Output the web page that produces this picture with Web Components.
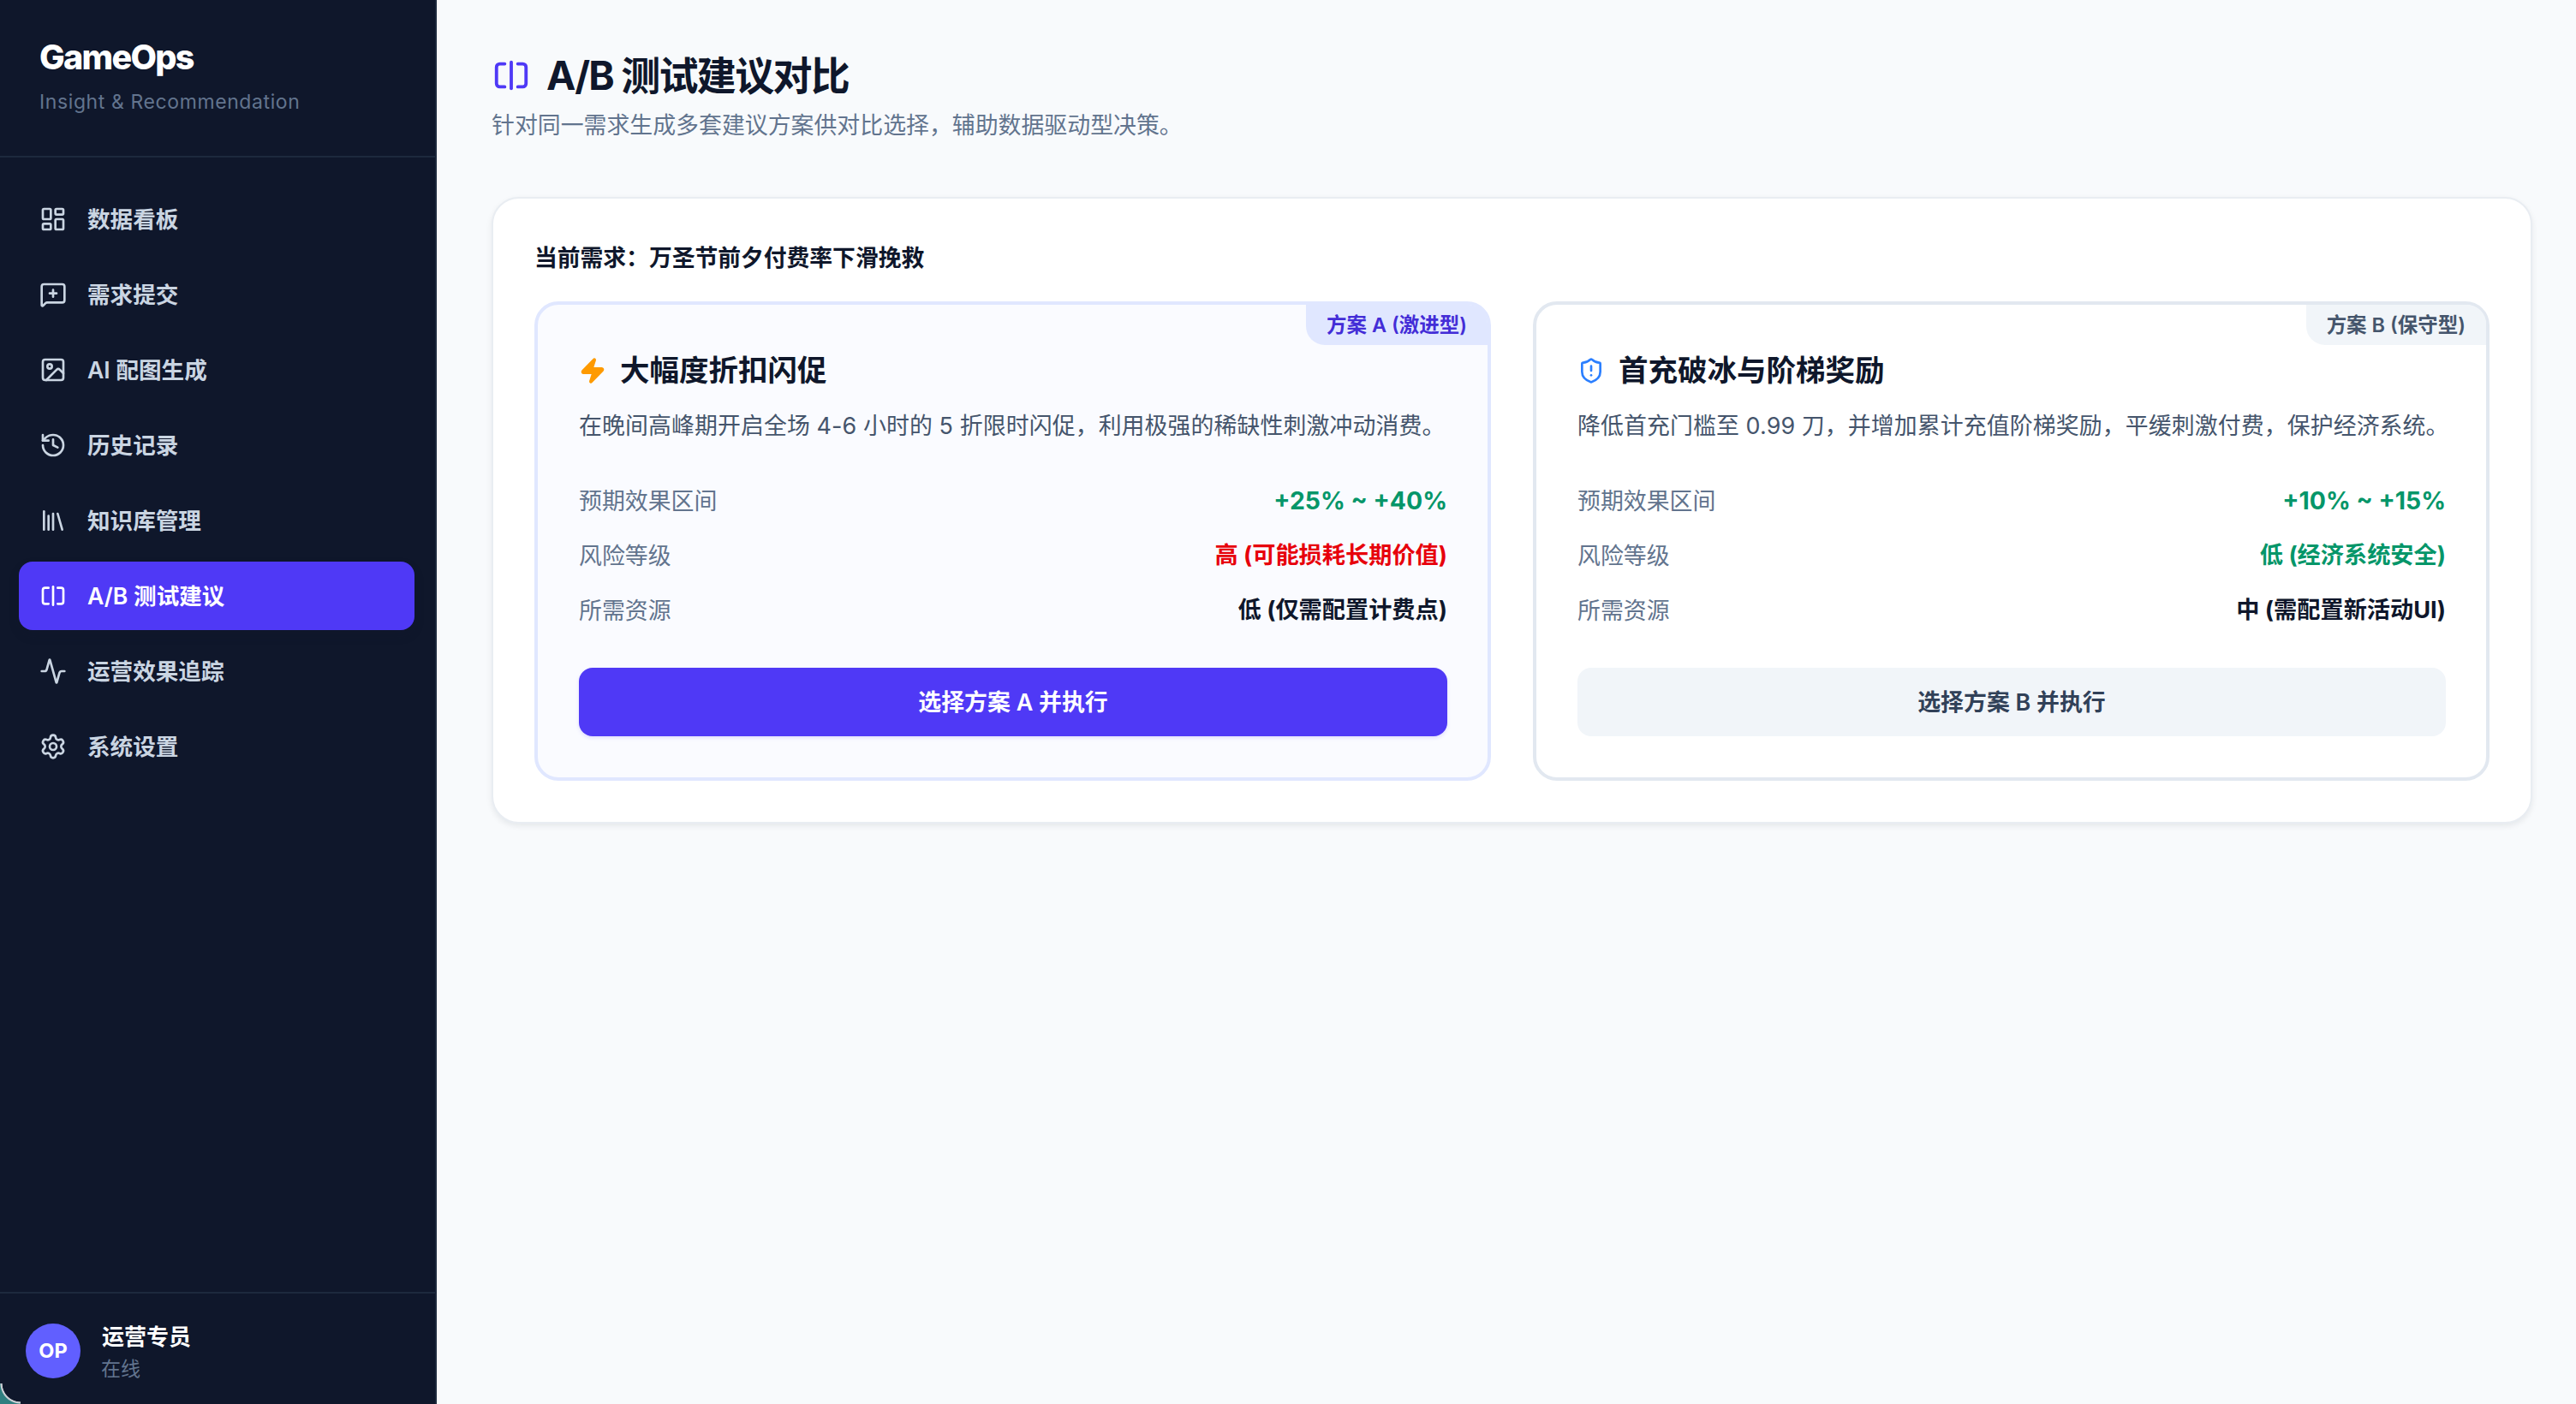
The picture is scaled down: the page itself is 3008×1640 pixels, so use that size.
<!DOCTYPE html>
<html lang="zh-CN"><head><meta charset="utf-8"><title>GameOps</title>
<style>
html,body{margin:0;height:100%;overflow:hidden}
body{font-family:Inter,"Noto Sans CJK SC",sans-serif;color:#0f172b;background:#f8fafc}
</style></head><body>
<ops-app>
  <ops-sidebar slot="side">
    <ops-nav-item icon="dashboard">数据看板</ops-nav-item>
    <ops-nav-item icon="message">需求提交</ops-nav-item>
    <ops-nav-item icon="image">AI 配图生成</ops-nav-item>
    <ops-nav-item icon="history">历史记录</ops-nav-item>
    <ops-nav-item icon="library">知识库管理</ops-nav-item>
    <ops-nav-item icon="split" active>A/B 测试建议</ops-nav-item>
    <ops-nav-item icon="activity">运营效果追踪</ops-nav-item>
    <ops-nav-item icon="settings">系统设置</ops-nav-item>
  </ops-sidebar>
  <ops-page-head></ops-page-head>
  <ops-panel need="当前需求：万圣节前夕付费率下滑挽救">
    <ops-plan variant="a" tag="方案 A (激进型)" icon="zap" title="大幅度折扣闪促"
      desc="在晚间高峰期开启全场 4-6 小时的 5 折限时闪促，利用极强的稀缺性刺激冲动消费。" action="选择方案 A 并执行">
      <ops-metric label="预期效果区间" tone="green" big>+25% ~ +40%</ops-metric>
      <ops-metric label="风险等级" tone="red">高 (可能损耗长期价值)</ops-metric>
      <ops-metric label="所需资源">低 (仅需配置计费点)</ops-metric>
    </ops-plan>
    <ops-plan variant="b" tag="方案 B (保守型)" icon="shield" title="首充破冰与阶梯奖励"
      desc="降低首充门槛至 0.99 刀，并增加累计充值阶梯奖励，平缓刺激付费，保护经济系统。" action="选择方案 B 并执行">
      <ops-metric label="预期效果区间" tone="green" big>+10% ~ +15%</ops-metric>
      <ops-metric label="风险等级" tone="green">低 (经济系统安全)</ops-metric>
      <ops-metric label="所需资源">中 (需配置新活动UI)</ops-metric>
    </ops-plan>
  </ops-panel>
</ops-app>
<script>
const ICONS={
dashboard:'<rect width="7" height="9" x="3" y="3" rx="1"/><rect width="7" height="5" x="14" y="3" rx="1"/><rect width="7" height="9" x="14" y="12" rx="1"/><rect width="7" height="5" x="3" y="16" rx="1"/>',
message:'<path d="M22 17a2 2 0 0 1-2 2H6.828a2 2 0 0 0-1.414.586l-2.202 2.202A.71.71 0 0 1 2 21.286V5a2 2 0 0 1 2-2h16a2 2 0 0 1 2 2z"/><path d="M12 8v6"/><path d="M9 11h6"/>',
image:'<rect width="18" height="18" x="3" y="3" rx="2" ry="2"/><circle cx="9" cy="9" r="2"/><path d="m21 15-3.086-3.086a2 2 0 0 0-2.828 0L6 21"/>',
history:'<path d="M3 12a9 9 0 1 0 9-9 9.75 9.75 0 0 0-6.74 2.74L3 8"/><path d="M3 3v5h5"/><path d="M12 7v5l4 2"/>',
library:'<path d="m16 6 4 14"/><path d="M12 6v14"/><path d="M8 8v12"/><path d="M4 4v16"/>',
split:'<path d="M8 19H5c-1.1 0-2-.9-2-2V7c0-1.1.9-2 2-2h3"/><path d="M16 5h3c1.1 0 2 .9 2 2v10c0 1.1-.9 2-2 2h-3"/><path d="M12 4v16"/>',
activity:'<path d="M22 12h-2.48a2 2 0 0 0-1.93 1.46l-2.35 8.36a.25.25 0 0 1-.48 0L9.24 2.18a.25.25 0 0 0-.48 0l-2.35 8.36A2 2 0 0 1 4.49 12H2"/>',
settings:'<path d="M9.671 4.136a2.34 2.34 0 0 1 4.659 0 2.34 2.34 0 0 0 3.319 1.915 2.34 2.34 0 0 1 2.33 4.033 2.34 2.34 0 0 0 0 3.831 2.34 2.34 0 0 1-2.33 4.033 2.34 2.34 0 0 0-3.319 1.915 2.34 2.34 0 0 1-4.659 0 2.34 2.34 0 0 0-3.32-1.915 2.34 2.34 0 0 1-2.33-4.033 2.34 2.34 0 0 0 0-3.831A2.34 2.34 0 0 1 6.35 6.051a2.34 2.34 0 0 0 3.32-1.915"/><circle cx="12" cy="12" r="3"/>',
zap:'<path d="M4 14a1 1 0 0 1-.78-1.63l9.9-10.2a.5.5 0 0 1 .86.46l-1.92 6.02A1 1 0 0 0 13 10h7a1 1 0 0 1 .78 1.63l-9.9 10.2a.5.5 0 0 1-.86-.46l1.92-6.02A1 1 0 0 0 11 14z" fill="currentColor"/>',
shield:'<path d="M20 13c0 5-3.5 7.5-7.66 8.95a1 1 0 0 1-.67-.01C7.5 20.5 4 18 4 13V6a1 1 0 0 1 1-1c2 0 4.5-1.2 6.24-2.72a1.17 1.17 0 0 1 1.52 0C14.51 3.81 17 5 19 5a1 1 0 0 1 1 1z"/><path d="M12 8v4"/><path d="M12 16h.01"/>'
};
const svg=(n,s,w=2)=>`<svg xmlns="http://www.w3.org/2000/svg" width="${s}" height="${s}" viewBox="0 0 24 24" fill="none" stroke="currentColor" stroke-width="${w}" stroke-linecap="round" stroke-linejoin="round" style="display:block;flex:none">${ICONS[n]}</svg>`;
function def(name,render){customElements.define(name,class extends HTMLElement{
  constructor(){super();this.attachShadow({mode:'open'})}
  connectedCallback(){this.shadowRoot.innerHTML=render(this)}
})}
def('ops-app',()=>`<style>
:host{display:flex;width:3008px;height:1640px;overflow:hidden;position:relative;background:#f8fafc}
main{flex:1;min-width:0;padding:0 51px 0 64px;box-sizing:border-box}
.corner{position:absolute;left:0;bottom:0;width:24px;height:24px;background:radial-gradient(circle at 100% 0,transparent 0 21px,#c9ced3 21.7px 23px,#2f7f80 24px)}
</style><slot name="side"></slot><main><slot></slot></main><div class="corner"></div>`);
def('ops-sidebar',()=>`<style>
:host{display:flex;flex-direction:column;flex:none;width:510px;height:1640px;box-sizing:border-box;background:#0f172b;border-right:2px solid #1d293d}
header{height:184px;box-sizing:border-box;padding-top:41px;padding-left:46px;border-bottom:2px solid #1d293d;flex:none}
h1{margin:0;font:800 39.5px/52px Inter,sans-serif;letter-spacing:-1.7px;color:#fff}
p{margin:10px 0 0;font:400 23px/32px Inter,sans-serif;letter-spacing:.6px;color:#62748e}
nav{flex:1;padding:32px 24px 0 22px;display:flex;flex-direction:column;gap:8px}
footer{height:131px;box-sizing:border-box;border-top:2px solid #1d293d;padding:33px 0 0 30px;display:flex;gap:25px;flex:none}
.av{width:64px;height:64px;margin-top:2px;border-radius:50%;background:#615fff;color:#fff;font:700 23.5px/64px Inter,sans-serif;text-align:center;flex:none}
.n{font:600 26px/36px Inter,"Noto Sans CJK SC",sans-serif;color:#fff}
.s{font:400 23px/30px Inter,"Noto Sans CJK SC",sans-serif;color:#62748e;margin-top:4px;margin-left:-1px}
</style><header><h1>GameOps</h1><p>Insight &amp; Recommendation</p></header><nav><slot></slot></nav>
<footer><div class="av">OP</div><div><div class="n">运营专员</div><div class="s">在线</div></div></footer>`);
def('ops-nav-item',h=>{const a=h.hasAttribute('active');return `<style>
:host{display:flex;align-items:center;gap:24px;height:80px;padding-left:24px;border-radius:16px;box-sizing:border-box;font:600 26.6px/36px Inter,"Noto Sans CJK SC",sans-serif;
color:${a?'#fff':'#cad5e2'};background:${a?'#4f39f6':'transparent'};${a?'box-shadow:0 6px 12px rgba(15,23,43,.18);':''}}
</style>${svg(h.getAttribute('icon'),32)}<slot></slot>`});
def('ops-page-head',()=>`<style>
:host{display:block;height:230px;box-sizing:border-box;padding-top:64px}
.t{display:flex;align-items:center;gap:18px;height:48px;color:#4f39f6}
h2{margin:0;font:700 46px/48px Inter,"Noto Sans CJK SC",sans-serif;letter-spacing:-1.7px;color:#0f172b}
p{margin:12px 0 0;font:400 26.9px/44px Inter,"Noto Sans CJK SC",sans-serif;color:#62748e}
</style><div class="t">${svg('split',46)}<h2>A/B 测试建议对比</h2></div><p>针对同一需求生成多套建议方案供对比选择，辅助数据驱动型决策。</p>`);
def('ops-panel',h=>`<style>
:host{display:block;height:732px;box-sizing:border-box;background:#fff;border:2px solid #e9edf2;border-radius:32px;padding:50px 48px 0;box-shadow:0 3px 7px rgba(15,23,43,.08)}
.need{margin:0 0 32px;font:700 26.8px/38px Inter,"Noto Sans CJK SC",sans-serif;color:#0f172b;height:38px;letter-spacing:-.02px}
.g{display:grid;grid-template-columns:1117px 1117px;gap:49px}
</style><div class="need">${h.getAttribute('need')}</div><div class="g"><slot></slot></div>`);
def('ops-plan',h=>{const a=h.getAttribute('variant')==='a';return `<style>
:host{display:block;position:relative;height:560px;box-sizing:border-box;border:4px solid ${a?'#e0e7ff':'#e2e8f0'};border-radius:28px;padding:53px 47px 0 48px;background:${a?'#fafbff':'#fff'}}
.tag{position:absolute;top:0;right:0;height:47px;box-sizing:border-box;padding:1px 24px 0;font:600 23.5px/46px Inter,"Noto Sans CJK SC",sans-serif;background:${a?'#e0e7ff':'#f1f5f9'};color:${a?'#432dd7':'#45556c'};border-radius:0 22px 0 22px}
.t{display:flex;align-items:center;gap:16px;height:48px;color:${a?'#fe9a00':'#2b7fff'}}
h3{margin:0;font:700 34.5px/48px Inter,"Noto Sans CJK SC",sans-serif;color:#0f172b}
p{margin:18px 0 0;font:400 26.9px/44px Inter,"Noto Sans CJK SC",sans-serif;color:#45556c;letter-spacing:.1px;white-space:nowrap}
.m{margin-top:34px;display:flex;flex-direction:column}
button{display:block;width:100%;height:80px;margin-top:35px;border:0;border-radius:16px;font:600 26.9px/36px Inter,"Noto Sans CJK SC",sans-serif;background:${a?'#4f39f6':'#f1f5f9'};color:${a?'#fff':'#314158'};${a?'box-shadow:0 2px 4px rgba(79,57,246,.15);':''}}
</style><div class="tag">${h.getAttribute('tag')}</div><div class="t">${svg(h.getAttribute('icon'),32)}<h3>${h.getAttribute('title')}</h3></div>
<p>${h.getAttribute('desc')}</p><div class="m"><slot></slot></div><button>${h.getAttribute('action')}</button>`});
def('ops-metric',h=>{const c={green:'#059669',red:'#e7000b'}[h.getAttribute('tone')]||'#0f172b';return `<style>
:host{display:flex;justify-content:space-between;align-items:center;height:64px;font:400 26.9px/36px Inter,"Noto Sans CJK SC",sans-serif;color:#62748e}
b{font-weight:700;font-size:${h.hasAttribute('big')?'28.4px':'27.2px'};color:${c}}
</style><span>${h.getAttribute('label')}</span><b><slot></slot></b>`});
</script>
</body></html>
